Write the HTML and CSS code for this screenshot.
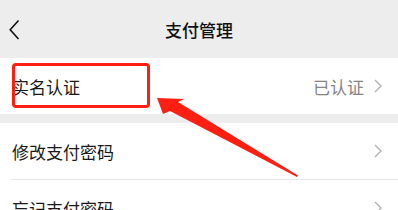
FILE: index.html
```html
<!DOCTYPE html>
<html lang="zh-CN">
  <head>
    <meta charset="UTF-8" />
    <meta name="viewport" content="width=device-width, initial-scale=1.0" />
    <title>支付管理</title>
    <link rel="stylesheet" href="styles.css">
  </head>
  <body>
    <div class="page">
      <header class="nav-bar">
        <span class="back">
          <svg width="12" height="22" viewBox="0 0 12 22">
            <polyline points="9.5,1.5 1.2,10.8 9.5,20" fill="none" stroke="#111" stroke-width="1.6" />
          </svg>
        </span>
        <h1 class="title">支付管理</h1>
        <span></span>
      </header>

      <section class="group">
        <div class="row">
          <span class="label">实名认证</span>
          <span class="value">已认证</span>
          <svg class="chevron" width="8" height="14" viewBox="0 0 8 14">
            <polyline points="1,1 7,7 1,13" fill="none" stroke="#b2b2b2" stroke-width="1.4" />
          </svg>
        </div>
      </section>

      <section class="group">
        <div class="row">
          <span class="label">修改支付密码</span>
          <svg class="chevron" width="8" height="14" viewBox="0 0 8 14">
            <polyline points="1,1 7,7 1,13" fill="none" stroke="#b2b2b2" stroke-width="1.4" />
          </svg>
        </div>
        <div class="row">
          <span class="label">忘记支付密码</span>
          <svg class="chevron" width="8" height="14" viewBox="0 0 8 14">
            <polyline points="1,1 7,7 1,13" fill="none" stroke="#b2b2b2" stroke-width="1.4" />
          </svg>
        </div>
      </section>

      <!-- annotation drawn over the screen -->
      <div class="mark-box"></div>
      <svg class="mark-arrow" width="398" height="210" viewBox="0 0 398 210">
        <polygon points="157,98 184,99 178,102 298,175.5 297,177 170,111 163,114" fill="#ff1e12" />
      </svg>
    </div>
  </body>
</html>
```

FILE: styles.css
```css
* {
  margin: 0;
  padding: 0;
  box-sizing: border-box;
}

body {
  background: #ededed;
  font-family: "Noto Sans CJK SC", "Noto Sans", sans-serif;
  overflow: hidden;
}

.page {
  position: relative;
  width: 398px;
  height: 210px;
  overflow: hidden;
}

.nav-bar {
  height: 58px;
  display: grid;
  grid-template-columns: 1fr auto 1fr;
  align-items: center;
  background: #ededed;
}

.back {
  display: flex;
  align-items: center;
  padding-left: 9px;
  padding-top: 1px;
}

.title {
  font-size: 17px;
  font-weight: 500;
  color: #111;
  letter-spacing: 0;
}

.group {
  background: #fff;
  margin-bottom: 9px;
}

.row {
  height: 56px;
  display: flex;
  align-items: center;
  padding: 0 16px 0 12px;
  position: relative;
}

.row + .row {
  border-top: 1px solid #e6e6e6;
  margin-left: 11px;
  padding-left: 1px;
  height: 57px;
}

.label {
  flex: 1;
  font-size: 17px;
  color: #1a1a1a;
}

.value {
  font-size: 17px;
  color: #858585;
  margin-right: 10px;
}

.chevron {
  display: block;
}

.mark-box {
  position: absolute;
  left: 12px;
  top: 63px;
  width: 138px;
  height: 45px;
  border: 3px solid #ff1e12;
  border-radius: 4px;
}

.mark-arrow {
  position: absolute;
  left: 0;
  top: 0;
}
```
